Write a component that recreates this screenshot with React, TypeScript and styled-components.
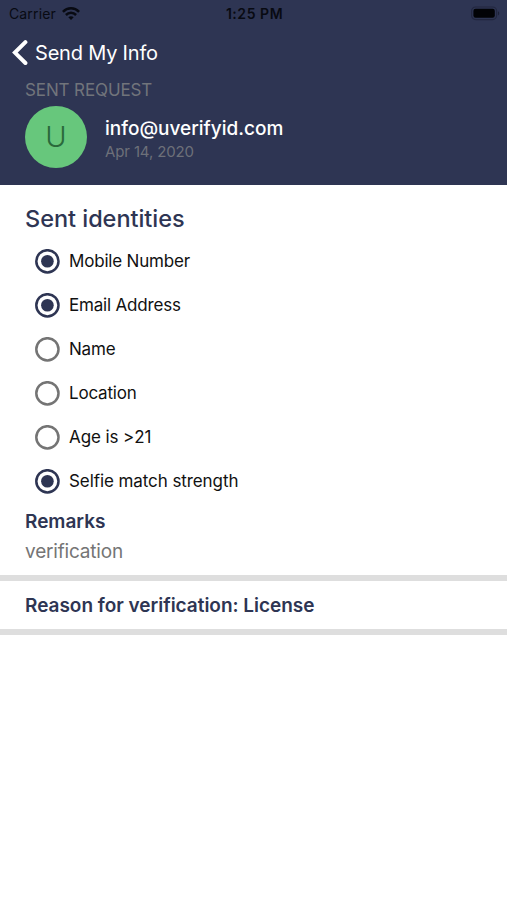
import React from 'react';
import styled, { createGlobalStyle } from 'styled-components';

const navy = '#2e3553';

const GlobalStyle = createGlobalStyle`
  * { box-sizing: border-box; }
  body { margin: 0; background: #fff; font-family: Inter, "Liberation Sans", sans-serif; }
`;

const Screen = styled.main`
  min-height: 900px;
  background: #fff;
`;

const Header = styled.header`
  height: 185px;
  background: ${navy};
`;

const StatusBar = styled.div`
  display: grid;
  grid-template-columns: 1fr auto 1fr;
  align-items: center;
  height: 28px;
  padding: 0 7px 0 9px;
  color: #080a12;
  font-size: 14px;
  line-height: 18px;
`;

const Carrier = styled.div`
  display: flex;
  align-items: center;
  gap: 6px;
  letter-spacing: 0.14px;
`;

const Clock = styled.div`
  font-weight: 600;
  letter-spacing: 0.55px;
`;

const BatterySlot = styled.div`
  display: flex;
  justify-content: flex-end;
`;

const NavBar = styled.nav`
  display: flex;
  align-items: center;
  gap: 6px;
  height: 49px;
  padding-left: 12px;
`;

const Title = styled.h1`
  margin: 0;
  color: #fff;
  font-size: 20px;
  font-weight: 400;
  line-height: 26px;
  letter-spacing: -0.2px;
`;

const Caption = styled.div`
  height: 28px;
  padding-left: 25px;
  color: #71747b;
  font-size: 17px;
  line-height: 26px;
  letter-spacing: -0.12px;
`;

const Contact = styled.section`
  display: flex;
  align-items: center;
  gap: 18px;
  height: 63px;
  padding-left: 25px;
`;

const Avatar = styled.div`
  display: flex;
  align-items: center;
  justify-content: center;
  width: 62px;
  height: 62px;
  border-radius: 50%;
  background: #67c77c;
  color: #2a693b;
  font-size: 29px;
  font-weight: 300;
  line-height: 36px;
`;

const ContactText = styled.div`
  padding-top: 5px;
`;

const Email = styled.div`
  color: #fff;
  font-size: 19px;
  font-weight: 500;
  line-height: 26px;
`;

const DateText = styled.div`
  color: #6d7079;
  font-size: 15px;
  line-height: 20px;
  letter-spacing: -0.13px;
`;

const Heading = styled.h2`
  margin: 0;
  height: 54px;
  padding: 19px 0 0 25px;
  color: ${navy};
  font-size: 23.5px;
  font-weight: 500;
  line-height: 30px;
  letter-spacing: -0.03px;
`;

const Options = styled.ul`
  margin: 0;
  padding: 0 0 0 35px;
  list-style: none;
`;

const Option = styled.li`
  display: flex;
  align-items: center;
  gap: 9px;
  height: 44px;
  color: #111;
  font-size: 17px;
  line-height: 24px;
`;

const OptionLabel = styled.span<{ $tracking: number }>`
  letter-spacing: ${p => p.$tracking}px;
`;

const Remarks = styled.section`
  height: 72px;
  padding: 6px 0 0 25px;
`;

const Strong = styled.h3`
  margin: 0;
  color: ${navy};
  font-size: 19px;
  font-weight: 600;
  line-height: 26px;
  letter-spacing: -0.02px;
`;

const RemarkText = styled.p`
  margin: 4px 0 0;
  color: #757575;
  font-size: 19px;
  line-height: 26px;
  letter-spacing: -0.18px;
`;

const Divider = styled.div`
  height: 6px;
  background: #dedede;
`;

const Reason = styled.section`
  display: flex;
  align-items: center;
  height: 48px;
  padding: 2px 0 0 25px;
`;

const identities = [
  { label: 'Mobile Number', checked: true, tracking: -0.19 },
  { label: 'Email Address', checked: true, tracking: -0.19 },
  { label: 'Name', checked: false, tracking: -0.19 },
  { label: 'Location', checked: false, tracking: -0.19 },
  { label: 'Age is >21', checked: false, tracking: -0.1 },
  { label: 'Selfie match strength', checked: true, tracking: -0.08 },
];

const RadioIcon = ({ checked }: { checked: boolean }) => (
  <svg width="25" height="25" viewBox="0 0 25 25">
    <circle cx="12.4" cy="12.3" r="11.1" fill="none" stroke={checked ? navy : '#747474'} strokeWidth="2.5" />
    {checked && <circle cx="12.4" cy="12.3" r="6.3" fill={navy} />}
  </svg>
);

const WifiIcon = () => (
  <svg width="18" height="14" viewBox="0 0 18 14" fill="none" stroke="#080a12" strokeWidth="2.5">
    <path d="M0.9 4.8C5.4 0.2 12.6 0.2 17.1 4.8" />
    <path d="M3.9 8C6.8 5.1 11.2 5.1 14.1 8" />
    <path d="M9 13.1L6.3 10.3C7.8 8.9 10.2 8.9 11.7 10.3Z" fill="#080a12" stroke="none" />
  </svg>
);

const BatteryIcon = () => (
  <svg width="30" height="16" viewBox="0 0 30 16">
    <rect x="1.6" y="1" width="25" height="12.6" rx="4" fill="none" stroke="#22273f" strokeWidth="1.2" />
    <rect x="3.4" y="2.8" width="21.4" height="9" rx="2.2" fill="#020306" />
    <path d="M28 5.2C29.7 5.8 29.7 8.8 28 9.4Z" fill="#1d2237" />
  </svg>
);

const BackIcon = () => (
  <svg width="17" height="26" viewBox="0 0 17 26" fill="none" stroke="#fff" strokeWidth="4" strokeLinecap="round">
    <path d="M13.4 2.2L2.9 12.6L13.4 23" strokeLinejoin="miter" />
  </svg>
);

export default function App() {
  return (
    <>
      <GlobalStyle />
      <Screen>
        <Header>
          <StatusBar>
            <Carrier>
              Carrier
              <WifiIcon />
            </Carrier>
            <Clock>1:25 PM</Clock>
            <BatterySlot>
              <BatteryIcon />
            </BatterySlot>
          </StatusBar>
          <NavBar>
            <BackIcon />
            <Title>Send My Info</Title>
          </NavBar>
          <Caption>SENT REQUEST</Caption>
          <Contact>
            <Avatar>U</Avatar>
            <ContactText>
              <Email>info@uverifyid.com</Email>
              <DateText>Apr 14, 2020</DateText>
            </ContactText>
          </Contact>
        </Header>
        <Heading>Sent identities</Heading>
        <Options>
          {identities.map(({ label, checked, tracking }) => (
            <Option key={label}>
              <RadioIcon checked={checked} />
              <OptionLabel $tracking={tracking}>{label}</OptionLabel>
            </Option>
          ))}
        </Options>
        <Remarks>
          <Strong>Remarks</Strong>
          <RemarkText>verification</RemarkText>
        </Remarks>
        <Divider />
        <Reason>
          <Strong>Reason for verification: License</Strong>
        </Reason>
        <Divider />
      </Screen>
    </>
  );
}
